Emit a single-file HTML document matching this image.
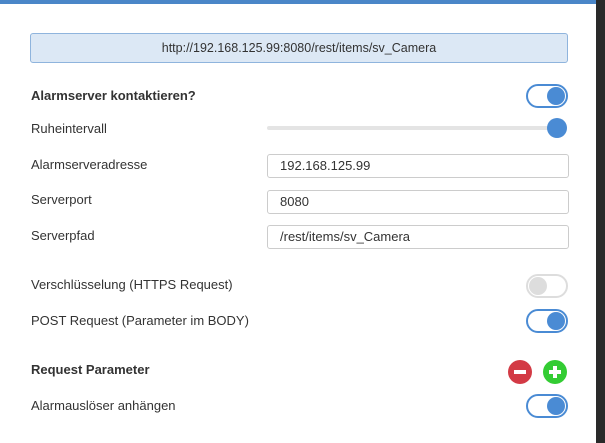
<!DOCTYPE html><html><head><style>
body{margin:0;width:605px;height:443px;background:#2a2a2a;position:relative;overflow:hidden;font-family:"Liberation Sans",sans-serif;font-size:13px;color:#333}
#w{position:absolute;left:0;top:0;width:596px;height:443px;background:#fff}
#bar{position:absolute;left:0;top:0;width:596px;height:4px;background:#4a86c8}
.a{position:absolute}
.url{left:30px;top:33px;width:536px;height:28px;background:#dce8f5;border:1px solid #8fb4dd;border-radius:3px;text-align:center;line-height:28px;font-size:12.5px}
.lbl{left:31px}
.tg{width:38px;height:20px;border:2px solid #4a8bd4;border-radius:12px;left:526px}
.tg::after{content:"";position:absolute;right:1px;top:1px;width:18px;height:18px;border-radius:50%;background:#4a8bd4}
.tg.off{border-color:#ddd}.tg.off::after{background:#ddd;left:1px;right:auto}
.in{left:267px;width:288px;height:22px;border:1px solid #ccc;border-radius:3px;padding-left:12px;line-height:22px}
.c{width:24px;height:24px;border-radius:50%;top:360px}
.h{position:absolute;left:6px;top:10px;width:12px;height:4px;background:#fff}
.v{position:absolute;left:10px;top:6px;width:4px;height:12px;background:#fff}
</style></head><body><div id="w"></div><div id="bar"></div>
<div class="a url">http://192.168.125.99:8080/rest/items/sv_Camera</div>
<div class="a lbl" style="top:88px;font-weight:bold">Alarmserver kontaktieren?</div>
<div class="a tg" style="top:84px"></div>
<div class="a lbl" style="top:121px">Ruheintervall</div>
<div class="a" style="left:267px;top:126px;width:290px;height:4px;background:#e4e4e4;border-radius:2px"></div>
<div class="a" style="left:547px;top:118px;width:20px;height:20px;border-radius:50%;background:#4a8bd4"></div>
<div class="a lbl" style="top:157px">Alarmserveradresse</div>
<div class="a in" style="top:154px">192.168.125.99</div>
<div class="a lbl" style="top:192px">Serverport</div>
<div class="a in" style="top:190px">8080</div>
<div class="a lbl" style="top:228px">Serverpfad</div>
<div class="a in" style="top:225px">/rest/items/sv_Camera</div>
<div class="a lbl" style="top:277px">Verschlüsselung (HTTPS Request)</div>
<div class="a tg off" style="top:274px"></div>
<div class="a lbl" style="top:313px">POST Request (Parameter im BODY)</div>
<div class="a tg" style="top:309px"></div>
<div class="a lbl" style="top:362px;font-weight:bold">Request Parameter</div>
<div class="a c" style="left:508px;background:#d33a45"><div class="h"></div></div>
<div class="a c" style="left:543px;background:#33cc33"><div class="h"></div><div class="v"></div></div>
<div class="a lbl" style="top:398px">Alarmauslöser anhängen</div>
<div class="a tg" style="top:394px"></div>
</body></html>
